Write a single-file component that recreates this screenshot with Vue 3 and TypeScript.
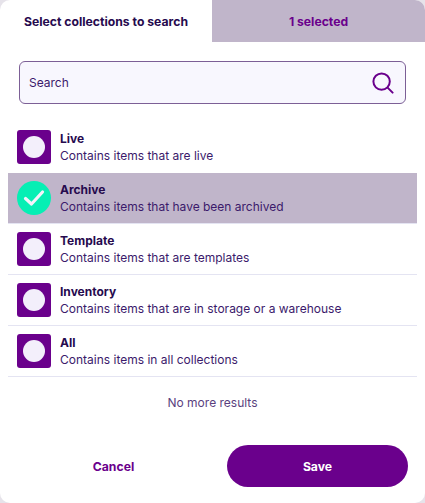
<script setup lang="ts">
interface Item { name: string; desc: string; selected?: boolean }
const items: Item[] = [
  { name: 'Live', desc: 'Contains items that are live' },
  { name: 'Archive', desc: 'Contains items that have been archived', selected: true },
  { name: 'Template', desc: 'Contains items that are templates' },
  { name: 'Inventory', desc: 'Contains items that are in storage or a warehouse' },
  { name: 'All', desc: 'Contains items in all collections' },
]
</script>

<template>
  <div class="modal">
    <div class="tabs">
      <div class="tab active">Select collections to search</div>
      <div class="tab other">1 selected</div>
    </div>
    <div class="search">
      <span class="placeholder">Search</span>
      <svg class="glass" width="22" height="22" viewBox="0 0 22 22" fill="none">
        <circle cx="9.6" cy="9.6" r="8.2" stroke="#6a008c" stroke-width="2" />
        <path d="M15.6 15.6 L20.6 20.6" stroke="#6a008c" stroke-width="2" stroke-linecap="round" />
      </svg>
    </div>
    <ul class="list">
      <li v-for="item in items" :key="item.name" class="row" :class="{ selected: item.selected }">
        <div v-if="item.selected" class="check">
          <svg width="22" height="18" viewBox="0 0 22 18" fill="none">
            <path d="M2.5 9.5 L8.5 15 L19.5 3" stroke="#f5f2fb" stroke-width="3.2" stroke-linecap="round" stroke-linejoin="round" />
          </svg>
        </div>
        <div v-else class="box"><span class="dot"></span></div>
        <div class="text">
          <div class="name">{{ item.name }}</div>
          <div class="desc">{{ item.desc }}</div>
        </div>
      </li>
    </ul>
    <div class="end">No more results</div>
    <div class="actions">
      <button class="cancel">Cancel</button>
      <button class="save">Save</button>
    </div>
  </div>
</template>

<style>
html, body { margin: 0; background: #e6e3ea; }
</style>

<style scoped>
.modal {
  width: 425px;
  height: 503px;
  background: #fff;
  border-radius: 10px;
  overflow: hidden;
  font-family: Inter, "Liberation Sans", sans-serif;
  color: #260a4e;
  display: flex;
  flex-direction: column;
}
.tabs { display: flex; height: 42px; }
.tab {
  display: flex;
  align-items: center;
  justify-content: center;
  font-size: 12.2px;
  font-weight: 700;
}
.active { width: 212px; color: #260a4e; }
.other { flex: 1; background: #c0b5ca; color: #6a008c; }
.search {
  margin: 19px 19px 0;
  height: 43px;
  box-sizing: border-box;
  border: 1px solid #7c5f96;
  border-radius: 6px;
  background: #f8f7fe;
  display: flex;
  align-items: center;
  justify-content: space-between;
  padding: 0 11px 0 9px;
}
.placeholder { font-size: 12px; color: #3b1a6b; }
.glass { display: block; }
.list { list-style: none; margin: 18px 8px 0; padding: 0; }
.row {
  height: 51px;
  box-sizing: border-box;
  display: flex;
  align-items: center;
  gap: 9px;
  padding: 0 9px;
  border-bottom: 1px solid #e4e4f2;
}
.row:first-child { border-bottom-color: transparent; }
.row.selected { background: #c0b5ca; border-bottom-color: #e4e4f2; }
.box, .check {
  width: 34px;
  height: 34px;
  flex: none;
  display: flex;
  align-items: center;
  justify-content: center;
}
.box { background: #6a008c; border-radius: 3px; }
.dot { width: 22px; height: 22px; border-radius: 50%; background: #f3effb; }
.check { background: #06efb4; border-radius: 50%; }
.text { min-width: 0; }
.name { font-size: 12px; font-weight: 700; line-height: 17px; color: #260a4e; }
.desc { font-size: 12px; line-height: 17px; color: #3b1a6b; }
.end {
  margin-top: 17px;
  text-align: center;
  font-size: 12px;
  line-height: 17px;
  color: #5a3f7e;
}
.actions {
  margin-top: 34px;
  display: flex;
  align-items: center;
  justify-content: space-between;
  padding: 0 17px 0 18px;
}
.actions button {
  border: 0;
  font-family: inherit;
  font-size: 12.2px;
  font-weight: 700;
  height: 42px;
  padding: 0;
  cursor: pointer;
}
.cancel { width: 191px; background: transparent; color: #6a008c; }
.save { width: 181px; background: #6a008c; color: #fff; border-radius: 21px; }
</style>
